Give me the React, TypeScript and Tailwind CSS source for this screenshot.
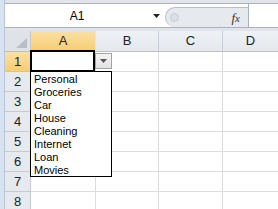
export default function App() {
  const rows = [1, 2, 3, 4, 5, 6, 7, 8];
  const items = ["Personal", "Groceries", "Car", "House", "Cleaning", "Internet", "Loan", "Movies"];
  return (
    <div className="relative w-[278px] h-[209px] overflow-hidden bg-white flex font-['Liberation_Sans',Arial,sans-serif] text-black">
      <div className="w-[5px] shrink-0 bg-[#d7e3f2] border-r border-[#b9c6d8]" />
      <div className="flex-1 flex flex-col min-w-0">
        {/* formula bar */}
        <div className="h-[31px] shrink-0 bg-[#e1e5eb] flex flex-col">
          <div className="h-[3px]" />
          <div className="h-[25px] bg-white border-y border-[#aab2bd] flex">
            <div className="w-[158px] flex items-center">
              <div className="flex-1 text-center text-[12px] leading-none">A1</div>
              <div className="w-[14px] flex items-center justify-center">
                <svg width="7" height="4" viewBox="0 0 7 4"><path d="M0 0h7L3.5 4z" fill="#222" /></svg>
              </div>
            </div>
            <div className="w-[2px]" />
            <div className="w-[83px] self-end h-[20px] rounded-l-full bg-[#e6e9ee] border-l border-t border-[#b7bec8] flex items-center">
              <div className="ml-[4px] w-[9px] h-[9px] rounded-full bg-[#dcdfe4] border border-[#c6ccd4]" />
              <div className="flex-1" />
              <div className="mr-[8px] font-['Liberation_Serif',serif] italic text-[13px] leading-none text-[#333]">
                f<span className="text-[11px]">x</span>
              </div>
            </div>
            <div className="flex-1 border-l border-[#aab2bd] bg-white" />
          </div>
        </div>
        {/* header row */}
        <div className="h-[21px] shrink-0 flex border-b border-[#b8c0ca] text-[13px] text-[#222]">
          <div className="w-[26px] shrink-0 bg-[#dfe3e8] border-r border-[#c3cad3] flex items-end justify-end pr-[3px] pb-[3px]">
            <svg width="11" height="10" viewBox="0 0 11 10"><path d="M11 0V10H0z" fill="#b7bec7" /></svg>
          </div>
          <div className="w-[65px] shrink-0 bg-gradient-to-b from-[#fbe0a3] to-[#f6cd72] border-r border-[#f1e4c0] flex items-center justify-center">A</div>
          <div className="w-[63px] shrink-0 bg-gradient-to-b from-[#eef1f5] to-[#e4e8ed] border-r border-[#c8ced6] flex items-center justify-center">B</div>
          <div className="w-[64px] shrink-0 bg-gradient-to-b from-[#eef1f5] to-[#e4e8ed] border-r border-[#c8ced6] flex items-center justify-center">C</div>
          <div className="flex-1 bg-gradient-to-b from-[#eef1f5] to-[#e4e8ed] flex items-center justify-center">D</div>
        </div>
        {/* rows */}
        {rows.map((r) => (
          <div key={r} className="h-[20px] shrink-0 flex">
            <div
              className={
                r === 1
                  ? "w-[26px] shrink-0 bg-gradient-to-b from-[#fbe0a3] to-[#f6cd72] border-r border-b border-[#d9c48e] flex items-center justify-center text-[13px] text-[#222]"
                  : "w-[26px] shrink-0 bg-[#e6e9ee] border-r border-b border-[#c3cad3] flex items-center justify-center text-[13px] text-[#222]"
              }
            >
              {r}
            </div>
            <div className="w-[65px] shrink-0 border-r border-b border-[#dadcdd]" />
            <div className="w-[63px] shrink-0 border-r border-b border-[#dadcdd]" />
            <div className="w-[64px] shrink-0 border-r border-b border-[#dadcdd]" />
            <div className="flex-1 border-b border-[#dadcdd]" />
          </div>
        ))}
      </div>

      {/* selection */}
      <div className="absolute left-[30px] top-[50px] w-[65px] h-[22px] border-2 border-black" />
      {/* dropdown button */}
      <div className="absolute left-[95px] top-[53px] w-[17px] h-[16px] bg-gradient-to-b from-[#f4f4f4] to-[#e2e2e2] border border-[#a3a3a3] flex items-center justify-center">
        <svg width="7" height="4" viewBox="0 0 7 4"><path d="M0 0h7L3.5 4z" fill="#555" /></svg>
      </div>
      {/* list */}
      <div className="absolute left-[30px] top-[71px] w-[82px] h-[106px] bg-white border border-black pt-[1px] pl-[3px] text-[11px]">
        {items.map((it) => (
          <div key={it} className="h-[13px] leading-[13px] text-black">{it}</div>
        ))}
      </div>
    </div>
  );
}
